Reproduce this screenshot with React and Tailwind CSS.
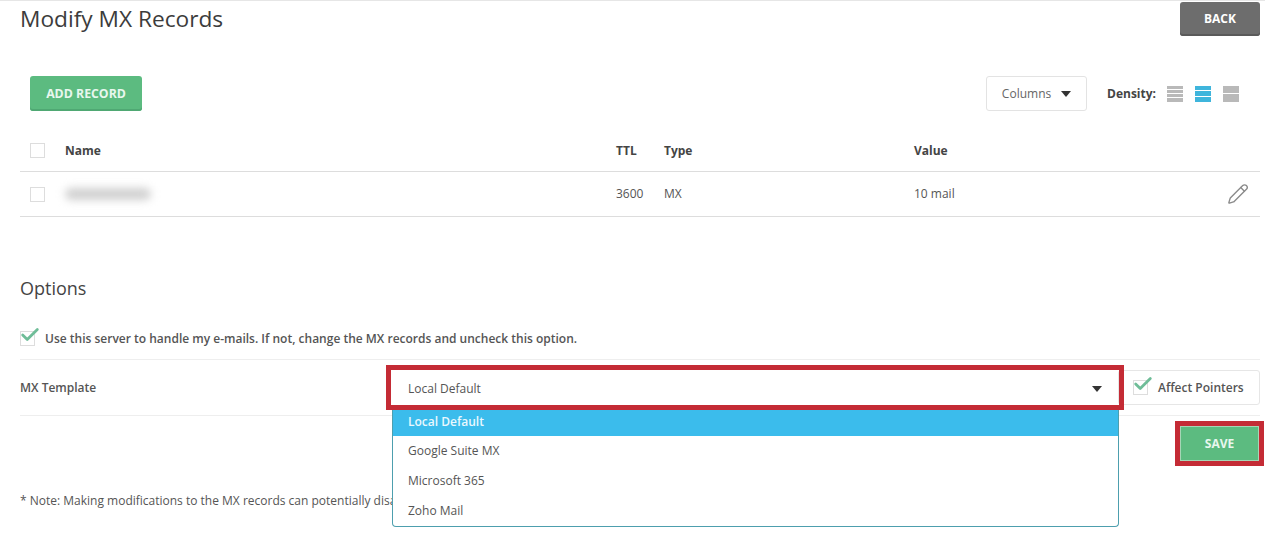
import { Check, Pencil } from "lucide-react";

const OPTIONS = ["Google Suite MX", "Microsoft 365", "Zoho Mail"];

const Caret = () => (
  <svg width="10" height="6" viewBox="0 0 10 6" className="shrink-0">
    <path d="M0 0h10L5 6z" fill="#333333" />
  </svg>
);

// stripes: gray/blue bars that stand for the row density
const DensityIcon = ({ rows, active }) => (
  <div className="flex h-[16px] w-[16px] flex-col gap-px">
    {Array.from({ length: rows }).map((_, i) => (
      <div key={i} className={`flex-1 ${active ? "bg-[#3fb5dc]" : "bg-[#b9b9b9]"}`} />
    ))}
  </div>
);

const Box = ({ checked }) => (
  <div className="relative h-[15px] w-[15px] shrink-0 border border-[#dddddd] bg-white">
    {checked && (
      <Check
        size={22}
        strokeWidth={3}
        className="absolute left-[-2px] top-[-8px] text-[#6fbd98]"
      />
    )}
  </div>
);

export default function App() {
  return (
    <div
      className="h-[551px] w-[1265px] overflow-hidden bg-white text-[#555555]"
      style={{ fontFamily: '"Open Sans", sans-serif' }}
    >
      <div className="border-t border-[#e6e6e6] pl-5 pr-[5px] pt-px">
        <div className="flex items-start justify-between">
          <h1 className="mt-[2px] text-[22.7px] font-medium leading-[30px] text-[#3c3c3c]">Modify MX Records</h1>
          <button className="h-[34px] w-[80px] rounded-[3px] bg-[#6d6d6d] text-[12px] font-bold text-white shadow-[inset_0_-2px_0_#5a5a5a]">
            BACK
          </button>
        </div>

        <div className="mt-[40px] flex items-center justify-between pl-[10px]">
          <button className="h-[35px] w-[112px] rounded-[3px] bg-[#5cbb80] pt-px text-[12.3px] font-bold text-[#e8f7ee] shadow-[inset_0_-2px_0_#4fa873]">
            ADD RECORD
          </button>
          <div className="flex items-center">
            <button className="flex h-[35px] w-[101px] items-center justify-center gap-[10px] rounded-[3px] border border-[#e3e3e3] text-[12px] text-[#666666]">
              Columns
              <Caret />
            </button>
            <span className="ml-[20px] text-[12px] font-bold text-[#444444]">Density:</span>
            <div className="ml-[11px] mr-[21px] flex gap-[12px]">
              <DensityIcon rows={4} />
              <DensityIcon rows={3} active />
              <DensityIcon rows={2} />
            </div>
          </div>
        </div>

        <div className="mt-[19px] grid h-[42px] grid-cols-[45px_551px_48px_250px_1fr] items-center border-b border-[#dddddd] text-[12px] font-bold text-[#444444]">
          <div className="pl-[10px]">
            <Box />
          </div>
          <span>Name</span>
          <span>TTL</span>
          <span>Type</span>
          <span>Value</span>
        </div>
        <div className="grid h-[45px] grid-cols-[45px_551px_48px_250px_1fr] items-center border-b border-[#dddddd] text-[12px]">
          <div className="pl-[10px]">
            <Box />
          </div>
          <div className="h-[12px] w-[86px] rounded-full bg-[#d0d0d0] blur-[4px]" />
          <span>3600</span>
          <span>MX</span>
          <div className="flex items-center justify-between pr-[11px]">
            <span>10 mail</span>
            <Pencil size={22} strokeWidth={1.5} className="text-[#8a8a8a]" />
          </div>
        </div>

        <h2 className="mt-[57px] text-[18px] font-normal leading-[28px] text-[#444444]">Options</h2>

        <div className="mt-[15px] flex h-[43px] items-center gap-[10px] border-b border-[#eeeeee] pt-px text-[12px] font-semibold text-[#555555]">
          <Box checked />
          <span>Use this server to handle my e-mails. If not, change the MX records and uncheck this option.</span>
        </div>

        <div className="flex h-[56px] items-center border-b border-[#eeeeee] text-[12px] font-semibold">
          <span className="w-[372px] shrink-0">MX Template</span>
          <div className="relative z-10 w-[726px] shrink-0">
            <div className="flex h-[33px] items-center justify-between bg-white px-[16px] pt-[2px] font-normal outline-[5px] outline-offset-[1px] outline-[#c42b35]">
              Local Default
              <Caret />
            </div>
            <div className="absolute left-0 top-[39px] w-[727px] rounded-b-[4px] border border-t-0 border-[#4d9fae] bg-white font-normal">
              <div className="flex h-[26px] items-center bg-[#3bbcec] pb-[3px] pl-[15px] font-semibold text-[#eaf8fe]">
                Local Default
              </div>
              {OPTIONS.map((o) => (
                <div key={o} className="flex h-[30px] items-center pl-[15px]">
                  {o}
                </div>
              ))}
            </div>
          </div>
          <div className="flex h-[35px] flex-1 items-center gap-[10px] rounded-[3px] border border-[#e6e6e6] pl-[14px]">
            <Box checked />
            <span className="whitespace-nowrap">Affect Pointers</span>
          </div>
        </div>

        <div className="flex justify-end pt-[10px]">
          <button className="mr-px h-[35px] w-[79px] border border-[#a5d6b5] bg-[#5cbb80] text-[12px] font-bold text-[#e8f7ee] outline-[5px] outline-[#c42b35]">
            SAVE
          </button>
        </div>

        <p className="mt-[31px] w-[372px] overflow-hidden whitespace-nowrap text-[12px]">
          * Note: Making modifications to the MX records can potentially disable your email service.
        </p>
      </div>
    </div>
  );
}
